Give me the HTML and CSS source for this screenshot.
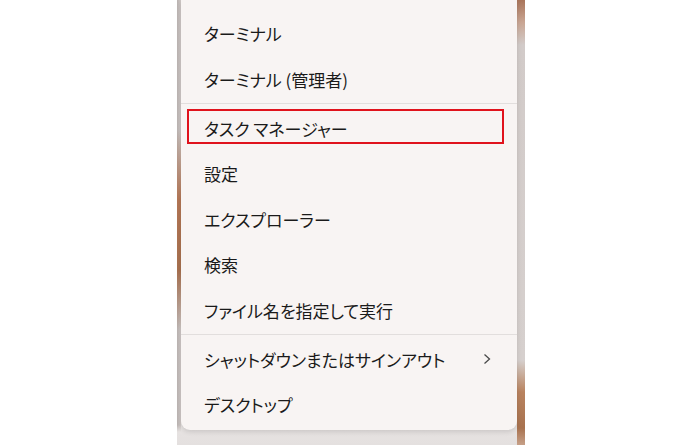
FILE: index.html
```html
<!DOCTYPE html>
<html lang="ja">
<head>
<meta charset="utf-8">
<link rel="stylesheet" href="styles.css">
</head>
<body>
<div class="photo">
  <div class="menu">
    <div class="item">ターミナル</div>
    <div class="item">ターミナル (管理者)</div>
    <div class="sep"></div>
    <div class="item marked">タスク マネージャー<span class="mark"></span></div>
    <div class="item">設定</div>
    <div class="item">エクスプローラー</div>
    <div class="item">検索</div>
    <div class="item">ファイル名を指定して実行</div>
    <div class="sep sep2"></div>
    <div class="item sub">シャットダウンまたはサインアウト
      <svg class="chev" width="8" height="12" viewBox="0 0 8 12"><path d="M1.5 1.5 L6.5 6 L1.5 10.5" fill="none" stroke="#4a4a4a" stroke-width="1.3"/></svg>
    </div>
    <div class="item">デスクトップ</div>
  </div>
</div>
</body>
</html>
```

FILE: styles.css
```css
html, body {
  margin: 0;
  padding: 0;
  background: #ffffff;
}
body {
  width: 700px;
  height: 445px;
  overflow: hidden;
  display: flex;
}
.photo {
  margin-left: 177px;
  width: 348px;
  height: 445px;
  box-sizing: border-box;
  padding: 0 8px 0 4px;
  background:
    linear-gradient(to bottom, rgba(231,227,227,0) 0, rgba(231,227,227,0) 425px, #e6e2e1 432px, #e4e0df 445px),
    linear-gradient(to right,
      #b9b2b0 0, #d0c9c7 4px, transparent 4px, transparent 340px, #c9bcb6 340px, #d8d2d0 348px),
    #e7e3e2;
  position: relative;
}
.photo::before {
  content: "";
  position: absolute;
  left: 0;
  top: 130px;
  width: 4px;
  height: 200px;
  background: linear-gradient(to bottom, rgba(170,110,80,0), #b37655 35%, #a7704f 70%, rgba(170,110,80,0));
}
.photo::after {
  content: "";
  position: absolute;
  right: 0;
  top: 0;
  width: 8px;
  height: 445px;
  background: linear-gradient(to bottom, #a9745a 0, #c9a592 22px, #d2cbc9 45px, #d6d0ce 360px, #b9835f 392px, #a8724f 428px, #c6a088 445px);
}
.menu {
  position: relative;
  z-index: 1;
  width: 336px;
  height: 430px;
  box-sizing: border-box;
  padding-top: 11px;
  background: #f8f4f3;
  border-radius: 0 0 9px 9px;
  box-shadow: 0 2px 5px rgba(0,0,0,0.12);
  font-family: "Noto Sans CJK JP", "Noto Sans", sans-serif;
  font-feature-settings: "palt";
  font-size: 17px;
  color: #1a1a1a;
}
.item {
  height: 45.4px;
  display: flex;
  align-items: center;
  padding-left: 23px;
  padding-right: 26px;
  position: relative;
  white-space: nowrap;
}
.sep {
  height: 1px;
  margin: 1px 0 2px;
  background: #e2dedd;
}
.sub {
  justify-content: space-between;
}
.chev {
  display: block;
}
.mark {
  position: absolute;
  left: 6px;
  top: 3px;
  width: 317px;
  height: 35px;
  box-sizing: border-box;
  border: 2.5px solid #e0121c;
}
```
